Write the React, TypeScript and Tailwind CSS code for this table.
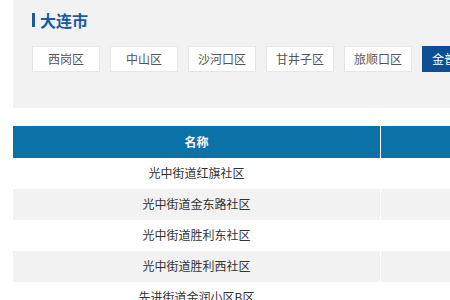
import React from "react";

const districts = ["西岗区", "中山区", "沙河口区", "甘井子区", "旅顺口区", "金普新区"];
const rows = [
  "光中街道红旗社区",
  "光中街道金东路社区",
  "光中街道胜利东社区",
  "光中街道胜利西社区",
  "先进街道金润小区B区",
];

export default function App() {
  return (
    <div
      className="w-[450px] h-[300px] overflow-hidden bg-white pl-[13px]"
      style={{ fontFamily: '"Microsoft YaHei", "Noto Sans CJK SC", sans-serif' }}
    >
      <div className="h-[108px] bg-[#f2f2f2] pt-[12px] pl-[19px]">
        <div className="flex items-center h-[16px]">
          <div className="w-[3px] h-[14px] bg-[#1a5b9c]" />
          <span className="ml-[5px] text-[16px] leading-[16px] font-bold text-[#1a5b9c] whitespace-nowrap">
            大连市
          </span>
        </div>
        <div className="flex gap-[10px] mt-[18px] whitespace-nowrap">
          {districts.map((d, i) => (
            <div
              key={d}
              className={
                i === districts.length - 1
                  ? "shrink-0 w-[68px] h-[26px] flex items-center justify-center text-[12px] bg-[#0d4f95] text-white"
                  : "shrink-0 w-[68px] h-[26px] flex items-center justify-center text-[12px] bg-white text-[#555] border border-[#e6e6e6]"
              }
            >
              {d}
            </div>
          ))}
        </div>
      </div>
      <div className="mt-[18px]">
        <div className="flex h-[32px] bg-[#0b72a8] text-white">
          <div className="w-[368px] flex items-center justify-center text-[12px] font-bold border-r border-white">
            名称
          </div>
          <div className="flex-1" />
        </div>
        {rows.map((r, i) => (
          <div
            key={r}
            className={
              i % 2 === 1
                ? "flex h-[31px] bg-[#f2f2f2] text-[#333]"
                : "flex h-[31px] bg-white text-[#333]"
            }
          >
            <div className="w-[368px] flex items-center justify-center pb-[2px] text-[12px] border-r border-white">
              {r}
            </div>
            <div className="flex-1" />
          </div>
        ))}
      </div>
    </div>
  );
}
